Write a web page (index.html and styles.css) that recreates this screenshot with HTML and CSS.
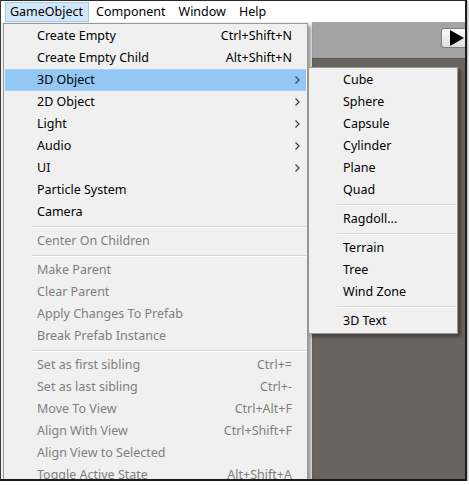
FILE: index.html
```html
<!DOCTYPE html>
<html>
<head>
<meta charset="utf-8">
<link rel="stylesheet" href="styles.css">
</head>
<body>
<div class="frame">
  <div class="menubar">
    <span class="mb-item active">GameObject</span>
    <span class="mb-item">Component</span>
    <span class="mb-item">Window</span>
    <span class="mb-item">Help</span>
  </div>
  <div class="workspace">
    <div class="left-panel"></div>
    <div class="right-panel">
      <div class="toolbar">
        <div class="play-btn"><svg width="16" height="16" viewBox="0 0 16 16"><path d="M1 0 L15 8 L1 16 Z" fill="#000"/></svg></div>
      </div>
      <div class="scene"></div>
    </div>

    <div class="menu main-menu">
      <div class="row"><span class="label">Create Empty</span><span class="key">Ctrl+Shift+N</span></div>
      <div class="row"><span class="label">Create Empty Child</span><span class="key">Alt+Shift+N</span></div>
      <div class="row hl"><span class="label">3D Object</span><svg class="arrow" width="5" height="8" viewBox="0 0 5 8"><path d="M0.5 0.5 L4 4 L0.5 7.5" fill="none" stroke="currentColor" stroke-width="1.2"/></svg></div>
      <div class="row"><span class="label">2D Object</span><svg class="arrow" width="5" height="8" viewBox="0 0 5 8"><path d="M0.5 0.5 L4 4 L0.5 7.5" fill="none" stroke="currentColor" stroke-width="1.2"/></svg></div>
      <div class="row"><span class="label">Light</span><svg class="arrow" width="5" height="8" viewBox="0 0 5 8"><path d="M0.5 0.5 L4 4 L0.5 7.5" fill="none" stroke="currentColor" stroke-width="1.2"/></svg></div>
      <div class="row"><span class="label">Audio</span><svg class="arrow" width="5" height="8" viewBox="0 0 5 8"><path d="M0.5 0.5 L4 4 L0.5 7.5" fill="none" stroke="currentColor" stroke-width="1.2"/></svg></div>
      <div class="row"><span class="label">UI</span><svg class="arrow" width="5" height="8" viewBox="0 0 5 8"><path d="M0.5 0.5 L4 4 L0.5 7.5" fill="none" stroke="currentColor" stroke-width="1.2"/></svg></div>
      <div class="row"><span class="label">Particle System</span></div>
      <div class="row"><span class="label">Camera</span></div>
      <div class="sep"></div>
      <div class="row dis"><span class="label">Center On Children</span></div>
      <div class="sep"></div>
      <div class="row dis"><span class="label">Make Parent</span></div>
      <div class="row dis"><span class="label">Clear Parent</span></div>
      <div class="row dis"><span class="label">Apply Changes To Prefab</span></div>
      <div class="row dis"><span class="label">Break Prefab Instance</span></div>
      <div class="sep"></div>
      <div class="row dis"><span class="label">Set as first sibling</span><span class="key">Ctrl+=</span></div>
      <div class="row dis"><span class="label">Set as last sibling</span><span class="key">Ctrl+-</span></div>
      <div class="row dis"><span class="label">Move To View</span><span class="key">Ctrl+Alt+F</span></div>
      <div class="row dis"><span class="label">Align With View</span><span class="key">Ctrl+Shift+F</span></div>
      <div class="row dis"><span class="label">Align View to Selected</span></div>
      <div class="row dis"><span class="label">Toggle Active State</span><span class="key">Alt+Shift+A</span></div>
    </div>

    <div class="menu sub-menu">
      <div class="row"><span class="label">Cube</span></div>
      <div class="row"><span class="label">Sphere</span></div>
      <div class="row"><span class="label">Capsule</span></div>
      <div class="row"><span class="label">Cylinder</span></div>
      <div class="row"><span class="label">Plane</span></div>
      <div class="row"><span class="label">Quad</span></div>
      <div class="sep"></div>
      <div class="row"><span class="label">Ragdoll...</span></div>
      <div class="sep"></div>
      <div class="row"><span class="label">Terrain</span></div>
      <div class="row"><span class="label">Tree</span></div>
      <div class="row"><span class="label">Wind Zone</span></div>
      <div class="sep"></div>
      <div class="row"><span class="label">3D Text</span></div>
    </div>
  </div>
</div>
</body>
</html>
```

FILE: styles.css
```css
html, body {
  margin: 0;
  padding: 0;
  background: #ffffff;
}
body {
  font-family: "Noto Sans", "Open Sans", sans-serif;
  font-size: 12.5px;
  color: #000;
}
.frame {
  position: relative;
  width: 464px;
  height: 478px;
  border-top: 1px solid #2a2a2a;
  border-left: 1px solid #3a3a3a;
  border-right: 2px solid #1c1c1c;
  border-bottom: 2px solid #1c1c1c;
  box-shadow: 1px 1px 2px rgba(0,0,0,0.35);
  overflow: hidden;
  display: flex;
  flex-direction: column;
  background: #fff;
}
.menubar {
  height: 21px;
  display: flex;
  align-items: flex-start;
  padding-left: 4px;
  background: #ffffff;
  flex: none;
}
.mb-item {
  box-sizing: border-box;
  height: 20px;
  margin-top: 1px;
  margin-right: 2px;
  padding: 0 5px 0 4px;
  border: 1px solid transparent;
  line-height: 18px;
  white-space: nowrap;
}
.mb-item.active {
  background: #d3e7f8;
  border-color: #a3cbee;
}
.workspace {
  position: relative;
  flex: 1;
  display: flex;
}
.left-panel {
  width: 311px;
  background: #f0f0f0;
  flex: none;
}
.right-panel {
  flex: 1;
  display: flex;
  flex-direction: column;
}
.toolbar {
  height: 36px;
  background: #a4a4a4;
  display: flex;
  justify-content: flex-end;
  align-items: flex-start;
  flex: none;
}
.play-btn {
  box-sizing: border-box;
  width: 30px;
  height: 20px;
  margin-top: 6px;
  margin-right: -6px;
  border: 1px solid #7d7d7d;
  border-radius: 3px;
  background: linear-gradient(#fbfbfb, #dedede);
  display: flex;
  align-items: center;
  padding-left: 7px;
}
.scene {
  flex: 1;
  background: #6a645e;
  border-top: 1px solid #5a5550;
}
.menu {
  position: absolute;
  box-sizing: border-box;
  background: #f0f0f0;
  border: 1px solid #979797;
  padding: 1px;
  box-shadow: 3px 3px 3px rgba(0,0,0,0.35);
}
.main-menu {
  left: 2px;
  top: 1px;
  width: 305px;
}
.sub-menu {
  left: 307px;
  top: 45px;
  width: 150px;
}
.row {
  height: 22px;
  line-height: 22px;
  display: flex;
  align-items: center;
  padding-left: 32px;
  padding-right: 6px;
  white-space: nowrap;
  color: #000;
}
.sub-menu .row {
  padding-left: 33px;
}
.row .label {
  flex: 1;
}
.row .key {
  margin-right: 8px;
}
.row .arrow {
  color: #3c3c3c;
  flex: none;
}
.row.hl {
  background: #93c8f4;
  box-shadow: inset 0 1px 0 #aad4f7, inset 0 -1px 0 #aad4f7;
}
.row.hl .arrow {
  color: #21446a;
}
.row.dis {
  color: #7f7f7f;
}
.sep {
  height: 0;
  margin: 3px 0 2px 27px;
  border-top: 1px solid #d5d5d5;
  border-bottom: 1px solid #ffffff;
}
```
